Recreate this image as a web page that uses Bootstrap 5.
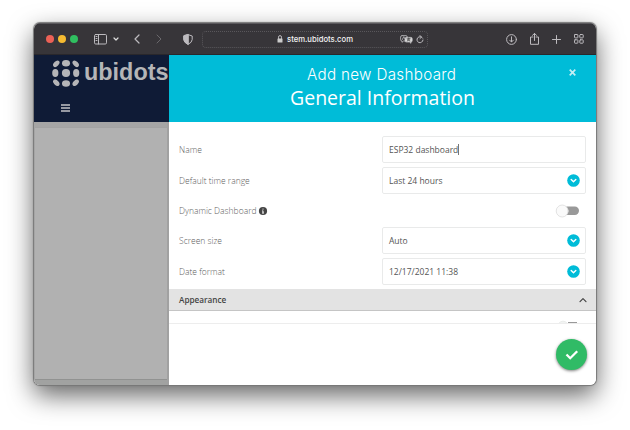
<!DOCTYPE html>
<html lang="en">
<head>
<meta charset="utf-8">
<meta name="viewport" content="width=device-width, initial-scale=1">
<title>Add new Dashboard</title>
<link href="https://cdn.jsdelivr.net/npm/bootstrap@5.3.0/dist/css/bootstrap.min.css" rel="stylesheet">
<style>
body{width:630px;height:430px;overflow:hidden;background:#fff;font-family:"Open Sans","Noto Sans",sans-serif;font-size:8.5px;line-height:12px;color:#555}
svg{display:block;flex:none;overflow:visible;fill:none;stroke:#bdbbbf;stroke-width:1;stroke-linecap:round;stroke-linejoin:round}
.browser{width:562px;height:362px;border-radius:6px;background:#fff;overflow:hidden}
.shade{box-shadow:0 0 1px 1px #777,0 10px 26px rgba(0,0,0,.62);border-radius:6px;width:562px;height:362px;margin:23px 0 0 34px}
.toolbar{height:32px;background:#373539;border-bottom:1px solid #29272b;border-top:1px solid #5b595d}
.light{width:8px;height:8px;border-radius:50%;margin-right:4px;flex:none}
.address{width:226px;height:17px;border:1px dotted #59575b;border-radius:4px;margin-left:8px;color:#f3f3f3;font:500 8.2px/12px Inter,sans-serif}
.side{width:135px;background:#b1b1b1}
.side-head{height:67px;background:#0f1b36}
.wordmark{font:700 24px/26px "Liberation Sans",sans-serif;fill:#b5b5b7;stroke:none}
.logo{width:135px;height:35px}
.menu-lines{margin:14px 0 0 27px}
.side-body{border-right:2px solid #a1a1a1;border-left:1px solid #a5a5a5}
.side-strip{height:6px;background:#a5a5a5;border-bottom:1px solid #a3a3a3}
.side-foot{height:6px;background:#a1a2a1;border-top:1px solid #919291}
.panel-head{height:67px;background:#00bcd8;color:#fff}
.head-small{font:300 15.2px/18px Inter,sans-serif;padding-top:11px}
.head-large{font:400 19.5px/25px "Open Sans",sans-serif;padding-top:3px}
.dismiss{right:20px;top:14px}
.fields{padding:14px 10px 0}
.field-row{height:27px}
.field-label{width:203px;color:#606060;font-weight:300}
.field-box{width:204px;height:27px;border:1px solid #e9eaea;border-radius:2px;padding:0 5px 0 6px;color:#555}
.caret{width:1px;height:11px;background:#777}
.switch-row{height:25px;margin:4px 0}
.section-bar{height:22px;background:#e3e3e3;border-bottom:1px solid #c5c5c5;margin-top:4px;padding:0 9px 0 10px;font-weight:600;font-size:8.2px;color:#444}
.clipped{height:13px;border-bottom:1px solid #ededed;padding:9px 18px 0 0}
.confirm{width:31px;height:31px;border-radius:50%;background:#30bb66;margin:15px 9px 0 0;box-shadow:0 1px 3px rgba(0,0,0,.5)}
</style>
<script src="https://cdn.jsdelivr.net/npm/bootstrap@5.3.0/dist/js/bootstrap.bundle.min.js"></script>
</head>
<body class="d-flex align-items-start">
<div class="shade">
<main class="browser d-flex flex-column">
  <header class="toolbar d-flex align-items-center flex-shrink-0">
    <span class="light" style="margin-left:12px;background:#ec6156"></span>
    <span class="light" style="background:#f6bb31"></span>
    <span class="light" style="background:#30bf60"></span>
    <svg style="margin-left:11.5px" width="13" height="11"><rect x=".5" y=".5" width="12" height="9.5" rx="1.2"/><path d="M4.5.5v9.5M2 2.5h1M2 4.5h1M2 6.5h1"/></svg>
    <svg style="margin-left:6px;stroke:#ddd;stroke-width:1.2" width="6" height="5"><path d="M1 1l2 2 2-2"/></svg>
    <svg style="margin-left:15px;stroke-width:1.2" width="6" height="10"><path d="M5 1L1 5l4 4"/></svg>
    <svg style="margin-left:16px;stroke:#6a686c" width="6" height="10"><path d="M1 1l4 4-4 4"/></svg>
    <svg style="margin-left:21.5px;margin-right:1px" width="10" height="11"><path d="M5 .6L9.2 2v3.6Q9 8.5 5 10.4 1 8.5.8 5.6V2z"/><path d="M5 .6L.8 2v3.6Q1 8.5 5 10.4z" fill="#bdbbbf"/></svg>
    <div class="address d-flex align-items-center">
      <svg style="margin-left:74px" width="6" height="8"><path d="M1.5 3.5V2.2Q1.5.6 3 .6t1.5 1.6v1.3"/><rect x=".5" y="3.5" width="5" height="4" rx=".5" fill="#ccc" stroke="none"/></svg>
      <svg style="margin-left:4px" width="67" height="12"><text x="0" y="9" textLength="66" lengthAdjust="spacingAndGlyphs" fill="#f3f3f3" stroke="none">stem.ubidots.com</text></svg>
      <svg style="margin-left:46px;stroke-width:.8" width="13" height="9"><path d="M2 .6h4q1.3 0 1.3 1.2M5 6H3.5L2 7.3V6Q.6 6 .6 4.7V2Q.6.6 2 .6M2.3 4.6l1.5-3 1 2"/><path d="M6.3 2.4h4.6q1.3 0 1.3 1.3v2q0 1.3-1.3 1.3v1.3L9.5 7H6.3Q5 7 5 5.7v-2q0-1.3 1.3-1.3z" fill="#ddd"/><path d="M7 3.8h3.2M8.6 3v.8M7.2 6q2-.6 2.3-2.1M7.7 4.5Q8.5 5.7 10 6" stroke="#444"/></svg>
      <svg style="margin-left:3px" width="8" height="9"><path d="M6.6 3.2A3 3 0 1 0 7 5M4 .5l1.5 1.6L4 3.5"/></svg>
    </div>
    <svg style="margin-left:77.5px" width="11" height="11"><circle cx="5.5" cy="5.5" r="4.9"/><path d="M5.5 2.8v5M3.7 6.2l1.8 1.8 1.8-1.8"/></svg>
    <svg style="margin:0 0 1px 13px" width="9" height="12"><path d="M3 4H.5v7.3h8V4H6M4.5 7.5v-7M2.5 2.3l2-1.8 2 1.8"/></svg>
    <svg style="margin-left:13.5px" width="9" height="9"><path d="M4.5.5v8M.5 4.5h8"/></svg>
    <svg style="margin-left:13px" width="10" height="10"><rect x=".5" y=".5" width="3.4" height="3.4" rx=".6"/><rect x="5.8" y=".5" width="3.4" height="3.4" rx=".6"/><rect x=".5" y="5.8" width="3.4" height="3.4" rx=".6"/><rect x="5.8" y="5.8" width="3.4" height="3.4" rx=".6"/></svg>
  </header>
  <div class="d-flex flex-grow-1">
    <aside class="side d-flex flex-column flex-shrink-0">
      <div class="side-head">
        <svg class="logo" viewBox="0 0 135 35"><g fill="#b5b5b7" stroke="none">
          <ellipse cx="32" cy="8.2" rx="4" ry="3.2"/><circle cx="32" cy="18" r="4.1"/><ellipse cx="32" cy="28.5" rx="4" ry="3.2"/>
          <ellipse cx="21.3" cy="18" rx="3.1" ry="4"/><ellipse cx="42.2" cy="18" rx="3.1" ry="4"/>
          <ellipse cx="22.3" cy="8.8" rx="3.8" ry="2.4" transform="rotate(-45 22.3 8.8)"/><ellipse cx="41.7" cy="8.8" rx="3.8" ry="2.4" transform="rotate(45 41.7 8.8)"/>
          <ellipse cx="22.3" cy="27.7" rx="3.8" ry="2.4" transform="rotate(45 22.3 27.7)"/><ellipse cx="41.7" cy="27.7" rx="3.8" ry="2.4" transform="rotate(-45 41.7 27.7)"/></g>
          <text class="wordmark" x="50" y="25" textLength="84.5" lengthAdjust="spacingAndGlyphs">ubidots</text></svg>
        <svg class="menu-lines" width="9" height="8" style="stroke:#c4c4c6;stroke-width:1.3;stroke-linecap:butt"><path d="M0 1h9M0 4h9M0 7h9"/></svg>
      </div>
      <div class="side-body flex-grow-1 d-flex flex-column justify-content-between"><div class="side-strip"></div><div class="side-foot"></div></div>
    </aside>
    <section class="flex-grow-1">
      <div class="panel-head position-relative text-center">
        <div class="head-small"><svg style="margin-left:138px" width="151" height="18"><text x="0" y="13.5" textLength="149" fill="#fff" stroke="none">Add new Dashboard</text></svg></div>
        <div class="head-large"><svg style="margin-left:120.5px" width="188" height="25"><text x="0" y="17.5" textLength="185" lengthAdjust="spacingAndGlyphs" fill="#fff" stroke="none">General Information</text></svg></div>
        <svg class="dismiss position-absolute" width="7" height="7" style="stroke:#c3eef4;stroke-width:1.7;stroke-linecap:butt"><path d="M.7.7l5.6 5.6M6.3.7L.7 6.3"/></svg>
      </div>
      <div class="fields">
        <div class="field-row d-flex align-items-center"><span class="field-label">Name</span><div class="field-box d-flex align-items-center"><span>ESP32 dashboard</span><span class="caret"></span></div></div>
        <div class="field-row d-flex align-items-center mt-1"><span class="field-label">Default time range</span><div class="field-box d-flex align-items-center justify-content-between"><span>Last 24 hours</span><svg width="13" height="13"><circle cx="6.5" cy="6.5" r="6.3" fill="#00bcd8" stroke="none"/><path d="M4.2 5.5l2.3 2.2 2.3-2.2" stroke="#fff" stroke-width="1.4"/></svg></div></div>
        <div class="switch-row d-flex align-items-center justify-content-between"><span class="field-label d-flex align-items-center">Dynamic Dashboard<svg style="margin-left:2px" width="8" height="8"><circle cx="4" cy="4" r="4.1" fill="#444" stroke="none"/><path d="M4 3.7v2.4M3.3 3.9H4M3.2 6.1h1.6M4 1.6v1" stroke="#fff" stroke-linecap="butt"/></svg></span>
          <svg style="margin-right:6px" width="25" height="14"><rect x="8" y="2.5" width="16" height="8.5" rx="4.2" fill="#999" stroke="none"/><circle cx="7.2" cy="7" r="6" fill="#fafafa" stroke="#dcdcdc" stroke-width=".8"/></svg></div>
        <div class="field-row d-flex align-items-center"><span class="field-label">Screen size</span><div class="field-box d-flex align-items-center justify-content-between"><span>Auto</span><svg width="13" height="13"><circle cx="6.5" cy="6.5" r="6.3" fill="#00bcd8" stroke="none"/><path d="M4.2 5.5l2.3 2.2 2.3-2.2" stroke="#fff" stroke-width="1.4"/></svg></div></div>
        <div class="field-row d-flex align-items-center mt-1"><span class="field-label">Date format</span><div class="field-box d-flex align-items-center justify-content-between"><span>12/17/2021 11:38</span><svg width="13" height="13"><circle cx="6.5" cy="6.5" r="6.3" fill="#00bcd8" stroke="none"/><path d="M4.2 5.5l2.3 2.2 2.3-2.2" stroke="#fff" stroke-width="1.4"/></svg></div></div>
      </div>
      <div class="section-bar d-flex align-items-center justify-content-between"><span>Appearance</span><svg width="8" height="6" style="stroke:#444;stroke-width:1.2"><path d="M1 4.7l3-3 3 3"/></svg></div>
      <div class="clipped d-flex justify-content-end overflow-hidden"><svg width="20" height="3"><path d="M1 3q4-4 8 0" fill="#f2f4f3" stroke="#eaecea"/><path d="M10 2.5h9" stroke="#999" stroke-linecap="butt"/></svg></div>
      <div class="d-flex justify-content-end"><div class="confirm d-flex align-items-center justify-content-center"><svg width="14" height="12" style="stroke:#fff;stroke-width:2.3;stroke-linecap:butt;stroke-linejoin:miter"><path d="M1.5 5.5l3.7 3.7 7-7"/></svg></div></div>
    </section>
  </div>
</main>
</div>
</body>
</html>
